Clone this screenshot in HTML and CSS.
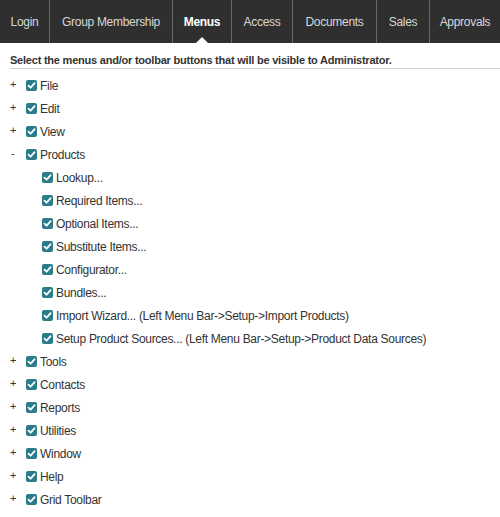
FILE: index.html
```html
<!DOCTYPE html>
<html>
<head>
<meta charset="utf-8">
<link rel="stylesheet" href="styles.css">
</head>
<body>
<nav class="tabs">
  <div class="tab">Login</div>
  <div class="tab">Group Membership</div>
  <div class="tab active">Menus</div>
  <div class="tab">Access</div>
  <div class="tab">Documents</div>
  <div class="tab">Sales</div>
  <div class="tab">Approvals</div>
</nav>
<div class="header">Select the menus and/or toolbar buttons that will be visible to Administrator.</div>
<ul class="tree">
  <li class="row"><span class="tog">+</span><span class="cb"></span><span class="lbl">File</span></li>
  <li class="row"><span class="tog">+</span><span class="cb"></span><span class="lbl">Edit</span></li>
  <li class="row"><span class="tog">+</span><span class="cb"></span><span class="lbl">View</span></li>
  <li class="row"><span class="tog minus">-</span><span class="cb"></span><span class="lbl">Products</span></li>
  <li class="row child"><span class="cb"></span><span class="lbl">Lookup...</span></li>
  <li class="row child"><span class="cb"></span><span class="lbl">Required Items...</span></li>
  <li class="row child"><span class="cb"></span><span class="lbl">Optional Items...</span></li>
  <li class="row child"><span class="cb"></span><span class="lbl">Substitute Items...</span></li>
  <li class="row child"><span class="cb"></span><span class="lbl">Configurator...</span></li>
  <li class="row child"><span class="cb"></span><span class="lbl">Bundles...</span></li>
  <li class="row child"><span class="cb"></span><span class="lbl">Import Wizard... (Left Menu Bar-&gt;Setup-&gt;Import Products)</span></li>
  <li class="row child"><span class="cb"></span><span class="lbl">Setup Product Sources... (Left Menu Bar-&gt;Setup-&gt;Product Data Sources)</span></li>
  <li class="row"><span class="tog">+</span><span class="cb"></span><span class="lbl">Tools</span></li>
  <li class="row"><span class="tog">+</span><span class="cb"></span><span class="lbl">Contacts</span></li>
  <li class="row"><span class="tog">+</span><span class="cb"></span><span class="lbl">Reports</span></li>
  <li class="row"><span class="tog">+</span><span class="cb"></span><span class="lbl">Utilities</span></li>
  <li class="row"><span class="tog">+</span><span class="cb"></span><span class="lbl">Window</span></li>
  <li class="row"><span class="tog">+</span><span class="cb"></span><span class="lbl">Help</span></li>
  <li class="row"><span class="tog">+</span><span class="cb"></span><span class="lbl">Grid Toolbar</span></li>
</ul>
</body>
</html>
```
FILE: styles.css
```css
html, body {
  margin: 0;
  padding: 0;
  background: #fff;
  font-family: "Liberation Sans", Arial, sans-serif;
  font-size: 12px;
  letter-spacing: -0.3px;
  color: #333;
  overflow: hidden;
}
.tabs {
  display: flex;
  height: 43px;
  background: #2f2f2f;
}
.tab {
  position: relative;
  display: flex;
  align-items: center;
  justify-content: center;
  border-right: 1px solid #6a6a6a;
  color: #d8d8d8;
  white-space: nowrap;
  flex: none;
}
.tab:nth-child(1) { width: 49px; }
.tab:nth-child(2) { width: 122px; }
.tab:nth-child(3) { width: 58px; }
.tab:nth-child(4) { width: 60px; }
.tab:nth-child(5) { width: 83px; }
.tab:nth-child(6) { width: 52px; }
.tab:nth-child(7) { width: 70px; border-right: none; }
.tab.active {
  color: #fff;
  font-weight: bold;
}
.tab.active::after {
  content: "";
  position: absolute;
  left: 50%;
  bottom: 0;
  margin-left: -6px;
  border-left: 6px solid transparent;
  border-right: 6px solid transparent;
  border-bottom: 6px solid #fff;
}
.header {
  margin: 10px 0 0 10px;
  padding-bottom: 1px;
  line-height: 14px;
  font-size: 11px;
  letter-spacing: -0.22px;
  font-weight: bold;
  color: #333;
  border-bottom: 1px solid #d0d0d0;
}
.tree {
  list-style: none;
  margin: 5px 0 0 0;
  padding: 0;
}
.row {
  display: flex;
  align-items: center;
  height: 23px;
  padding-left: 8px;
}
.row.child {
  padding-left: 42px;
}
.tog {
  width: 18px;
  font-size: 11px;
  line-height: 10px;
  color: #333;
  margin-top: -4px;
  padding-left: 2px;
  box-sizing: border-box;
}
.tog.minus {
  padding-left: 3px;
}
.cb {
  width: 11px;
  height: 11px;
  border-radius: 2px;
  background: #2b7c8a url("data:image/svg+xml;utf8,<svg xmlns='http://www.w3.org/2000/svg' width='11' height='11' viewBox='0 0 11 11'><path d='M2.5 5.6 L4.6 7.7 L8.6 3.2' fill='none' stroke='white' stroke-width='1.8' stroke-linecap='round' stroke-linejoin='round'/></svg>") no-repeat center;
  flex: none;
}
.lbl {
  margin-left: 3px;
  white-space: nowrap;
  color: #333;
}
```
